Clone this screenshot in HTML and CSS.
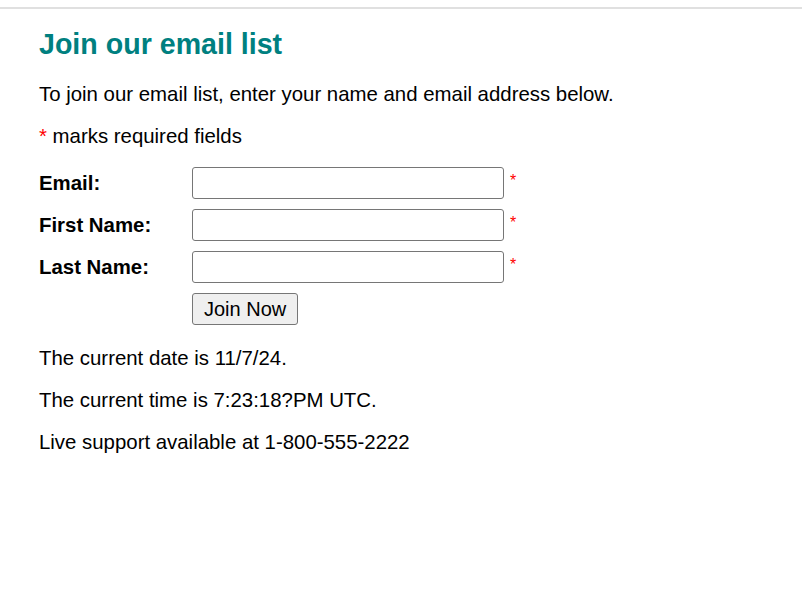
FILE: index.html
```html
<!DOCTYPE html>
<html>
<head>
<meta charset="utf-8">
<link rel="stylesheet" href="styles.css">
</head>
<body>
<div class="topline"></div>
<main class="page">
  <h1 class="title">Join our email list</h1>
  <p class="text">To join our email list, enter your name and email address below.</p>
  <p class="text"><span class="req">*</span> marks required fields</p>
  <form class="form">
    <div class="row">
      <label class="label">Email:</label>
      <input class="field" type="text">
      <span class="req-mark">*</span>
    </div>
    <div class="row">
      <label class="label">First Name:</label>
      <input class="field" type="text">
      <span class="req-mark">*</span>
    </div>
    <div class="row">
      <label class="label">Last Name:</label>
      <input class="field" type="text">
      <span class="req-mark">*</span>
    </div>
    <div class="row">
      <span class="label"></span>
      <button class="btn" type="button">Join Now</button>
    </div>
  </form>
  <p class="text">The current date is 11/7/24.</p>
  <p class="text">The current time is 7:23:18?PM UTC.</p>
  <p class="text">Live support available at 1-800-555-2222</p>
</main>
</body>
</html>
```
FILE: styles.css
```css
html, body {
  margin: 0;
  padding: 0;
  background: #fff;
}
body {
  font-family: "Liberation Sans", Arial, sans-serif;
  font-size: 20.4px;
  color: #000;
}
.topline {
  margin-top: 7px;
  height: 2px;
  background: #e0e0e0;
}
.page {
  padding: 0 39px;
}
.title {
  color: #008080;
  font-size: 28.6px;
  font-weight: bold;
  margin: 18px 0 22px;
  line-height: 34px;
}
.text {
  margin: 0 0 20px;
  line-height: 22px;
}
.req, .req-mark {
  color: #f00;
}
.form {
  display: flex;
  flex-direction: column;
  gap: 10px;
  margin-top: 3px;
  margin-bottom: 22px;
}
.row {
  display: flex;
  align-items: center;
  height: 32px;
}
.label {
  width: 153px;
  font-weight: bold;
}
.field {
  box-sizing: border-box;
  width: 312px;
  height: 32px;
  border: 1px solid #767676;
  border-radius: 3px;
  margin: 0;
  font-size: 20px;
}
.req-mark {
  font-size: 16px;
  margin-left: 6px;
  align-self: flex-start;
  margin-top: 5px;
}
.btn {
  box-sizing: border-box;
  height: 32px;
  padding: 0 11px;
  font-family: "Liberation Sans", Arial, sans-serif;
  font-size: 20px;
  background: #efefef;
  border: 1px solid #767676;
  border-radius: 3px;
  color: #000;
}
```
